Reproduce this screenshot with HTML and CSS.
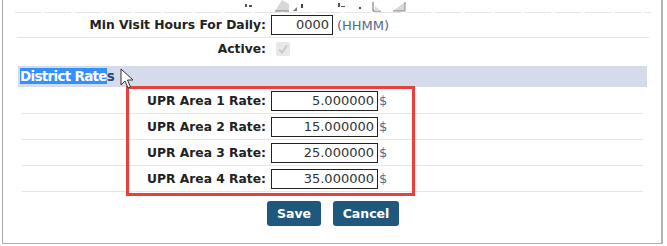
FILE: index.html
```html
<!DOCTYPE html>
<html>
<head>
<meta charset="utf-8">
<link rel="stylesheet" href="styles.css">
</head>
<body>
<div class="frame">
  <div class="topstrip">
    <svg class="frag" width="240" height="13" viewBox="0 0 240 13">
      <path d="M62 4 h2 v3 h-2z M66 5 h3 v2 h-3z" fill="#555"/>
      <path d="M92 11 L106 11 L106 4 L99 0 Z" fill="#d8d8d8"/>
      <path d="M92 11 L106 11" stroke="#777" stroke-width="1"/>
      <path d="M110 11 L114 7 L114 11 Z" fill="#777"/>
      <path d="M118 4 h2 v4 h-2z" fill="#444"/>
      <path d="M155 3 h2 v4 h-2z M158 6 h4 v1 h-4z" fill="#555"/>
      <path d="M176 7 h2 v2 h-2z" fill="#555"/>
      <path d="M190 2 v9 h8" stroke="#666" fill="none"/>
      <path d="M192 11 L198 11 L192 6 Z" fill="#ddd"/>
      <path d="M210 11 L222 11 L222 2 Z" fill="#d8d8d8"/>
      <path d="M210 11 L222 11 L222 2" stroke="#888" fill="none"/>
    </svg>
  </div>
  <div class="row row-top">
    <label class="lbl">Min Visit Hours For Daily:</label>
    <span class="inp inp-short">0000</span>
    <span class="hint">(HHMM)</span>
  </div>
  <div class="row row-active">
    <label class="lbl">Active:</label>
    <span class="chk">
      <svg width="14" height="14" viewBox="0 0 14 14"><path d="M3 7.5 L6 10.5 L11 3.5" stroke="#c9c9c9" stroke-width="2" fill="none"/></svg>
    </span>
  </div>
  <div class="band"><span class="sel">District Rate</span>s</div>
  <div class="rates">
    <div class="rate"><label class="lbl lbl-r">UPR Area 1 Rate:</label><span class="inp inp-long">5.000000</span><span class="cur">$</span></div>
    <div class="rate"><label class="lbl lbl-r">UPR Area 2 Rate:</label><span class="inp inp-long">15.000000</span><span class="cur">$</span></div>
    <div class="rate"><label class="lbl lbl-r">UPR Area 3 Rate:</label><span class="inp inp-long">25.000000</span><span class="cur">$</span></div>
    <div class="rate"><label class="lbl lbl-r">UPR Area 4 Rate:</label><span class="inp inp-long">35.000000</span><span class="cur">$</span></div>
  </div>
  <div class="buttons">
    <button class="btn btn-save">Save</button>
    <button class="btn btn-cancel">Cancel</button>
  </div>
  <div class="highlight"></div>
  <svg class="cursor" width="14" height="22" viewBox="0 0 14 22">
    <path d="M1 1 L1 17 L5 13 L8 20 L10.5 19 L7.5 12 L13 12 Z" fill="#fff" stroke="#333" stroke-width="1"/>
  </svg>
</div>
</body>
</html>
```

FILE: styles.css
```css
html, body {
  margin: 0;
  padding: 0;
  background: #fff;
}
body {
  font-family: "DejaVu Sans", Verdana, sans-serif;
  width: 667px;
  height: 246px;
  overflow: hidden;
}
.frame {
  position: relative;
  margin-left: 2px;
  width: 658px;
  height: 243px;
  border-left: 1px solid #a9a9a9;
  border-right: 2px solid #b4b4b4;
  border-bottom: 1px solid #b0b0b0;
  background: #fff;
}
.topstrip {
  height: 13px;
  margin: 0 10px 0 12px;
  background: repeating-linear-gradient(90deg, #e4e4e4 0 26px, #fff 26px 30px) bottom / 100% 1px no-repeat;
}
.frag {
  display: block;
  margin-left: 168px;
}
.row {
  display: flex;
  align-items: center;
  margin: 0 12px 0 14px;
  border-bottom: 1px solid #e3e5ec;
}
.row-top {
  height: 24px;
}
.row-active {
  height: 22px;
  border-bottom: none;
}
.lbl {
  font-weight: bold;
  font-size: 12.3px;
  color: #222;
  text-align: right;
  width: 249px;
  flex: none;
}
.inp {
  box-sizing: border-box;
  height: 20px;
  border: 1px solid #222;
  margin-left: 5px;
  font-size: 13px;
  color: #333;
  text-align: right;
  padding-right: 3px;
  line-height: 18px;
}
.inp-short { width: 62px; }
.inp-long { width: 107px; }
.hint {
  margin-left: 4px;
  font-size: 13px;
  color: #4f6a8f;
}
.chk {
  margin-left: 10px;
  width: 14px;
  height: 14px;
  background: #e8e8e8;
  border-radius: 2px;
  display: flex;
}
.band {
  margin: 6px 14px 0 15px;
  height: 21px;
  background: #d5dbea;
  font-size: 13.5px;
  letter-spacing: -0.7px;
  font-weight: bold;
  color: #2e4a6e;
  line-height: 21px;
  padding-left: 2px;
}
.sel {
  background: #3390ff;
  color: #fff;
}
.rates {
  margin: 1px 18px 0 19px;
}
.rate {
  display: flex;
  align-items: center;
  height: 25px;
  border-bottom: 1px solid #e3e5ec;
}
.lbl-r {
  width: 244px;
}
.cur {
  font-size: 13px;
  color: #4f6a8f;
  margin-left: 1px;
}
.buttons {
  display: flex;
  gap: 12px;
  margin: 9px 0 0 264px;
}
.btn {
  height: 25px;
  border: none;
  border-radius: 3px;
  background: #1f587c;
  color: #fff;
  font-family: "DejaVu Sans", Verdana, sans-serif;
  font-weight: bold;
  font-size: 12.5px;
  padding: 0;
}
.btn-save { width: 54px; }
.btn-cancel { width: 66px; }
.highlight {
  position: absolute;
  left: 123px;
  top: 86px;
  width: 283px;
  height: 104px;
  border: 3px solid #e8403b;
  pointer-events: none;
}
.cursor {
  position: absolute;
  left: 117px;
  top: 68px;
}
```
